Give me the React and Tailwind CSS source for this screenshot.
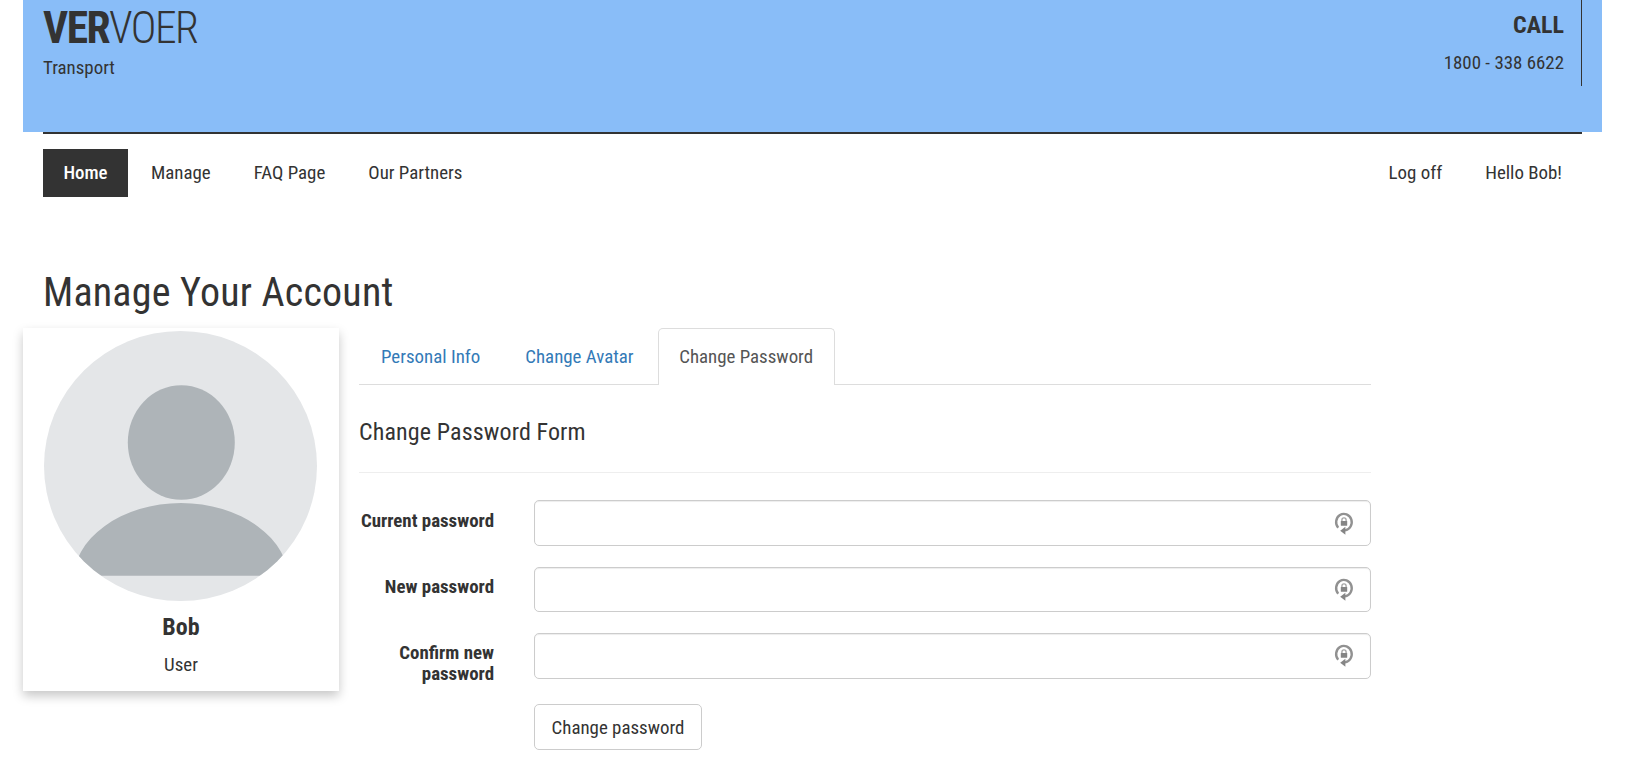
function ResetIcon() {
  return (
    <svg viewBox="0 0 20 24" className="h-6 w-5">
      <path d="M4.2 16.8 A7.8 8.3 0 1 1 11 19.4" fill="none" stroke="#919191" strokeWidth="2.4" />
      <path d="M6.2 19.8 L11.4 15.8 V23.8 Z" fill="#858585" />
      <path d="M7.9 10.6 V8.9 a2.1 2.1 0 0 1 4.2 0 V10.6" fill="none" stroke="#a3a3a3" strokeWidth="1.3" />
      <rect x="6.8" y="10" width="6.4" height="4.8" rx="0.5" fill="#858585" />
    </svg>
  );
}

function Avatar() {
  return (
    <svg viewBox="0 0 273 270" className="ml-[21px] block h-[270px] w-[273px]">
      <defs>
        <clipPath id="round">
          <ellipse cx="136.5" cy="135" rx="136.5" ry="135" />
        </clipPath>
      </defs>
      <g clipPath="url(#round)">
        <rect width="273" height="270" fill="#e4e6e8" />
        <ellipse cx="137.3" cy="111.5" rx="53.5" ry="57.3" fill="#aeb4b8" />
        <path d="M28.8 244.8 V251 A108.2 79 0 0 1 245.2 251 V244.8 Z" fill="#aeb4b8" />
      </g>
    </svg>
  );
}

function Field({ label, first, tall }) {
  return (
    <div className="flex items-start">
      <label className={"-ml-1 w-[139px] pl-1 text-right leading-[21px] font-bold " + (first ? "mt-[10px]" : "mt-[9px]")}>
        {label}
      </label>
      <div
        className={
          "ml-10 flex w-[837px] items-center justify-end rounded-[5px] border border-[#ccc] pr-4 shadow-[inset_0_1px_1px_rgba(0,0,0,0.075)] " +
          (tall ? "h-[46px] " : "h-[45px] ") +
          (first ? "" : "pb-0.5")
        }
      >
        <ResetIcon />
      </div>
    </div>
  );
}

export default function App() {
  return (
    <div className="h-[764px] w-[1642px] overflow-hidden bg-white pl-[23px] font-['Roboto_Condensed',Roboto,sans-serif] text-[18.9px] leading-[27px] text-[#333] [font-stretch:75%]">
      <header className="flex h-[132px] w-[1579px] justify-between bg-[#89bdf8] pl-5">
        <div>
          <div className="mt-1 h-[50px] text-[43.5px] leading-[50px] tracking-[-1.5px]">
            <span className="font-bold">VER</span>
            <span className="font-light">VOER</span>
          </div>
          <div>Transport</div>
        </div>
        <div className="mr-5 h-[86px] border-r border-[#333] pr-[17px] text-right">
          <div className="mt-2.5 text-2xl leading-[30px] font-bold">CALL</div>
          <div className="mt-[9px]">1800 - 338 6622</div>
        </div>
      </header>
      <nav className="ml-5 flex w-[1539px] border-t-2 border-[#333] pt-[15px] leading-[48px]">
        <a className="h-12 w-[85px] bg-[#333] text-center font-medium text-white">Home</a>
        <a className="ml-[23px]">Manage</a>
        <a className="ml-[43px]">FAQ Page</a>
        <a className="ml-[43px]">Our Partners</a>
        <a className="ml-auto">Log off</a>
        <a className="mr-5 ml-[43px]">Hello Bob!</a>
      </nav>
      <h1 className="mt-[71px] ml-5 h-[59px] text-[40px] leading-[50px] tracking-[0.2px]">Manage Your Account</h1>
      <div className="flex">
        <aside className="mt-px h-[363px] w-[316px] pt-[3px] text-center shadow-[0_5px_10px_rgba(0,0,0,0.22)]">
          <Avatar />
          <div className="mt-[11px] text-2xl leading-[30px] font-bold">Bob</div>
          <div className="mt-[9px]">User</div>
        </aside>
        <main className="mt-px ml-5 w-[1012px]">
          <div className="flex h-[57px] border-b border-[#ddd] leading-[57px]">
            <a className="ml-[22px] text-[#337ab7]">Personal Info</a>
            <a className="ml-[45px] text-[#337ab7]">Change Avatar</a>
            <a className="ml-[24px] h-[57px] w-[177px] rounded-t-[5px] border border-b-0 border-[#ddd] bg-white text-center leading-[55px] text-[#555]">
              Change Password
            </a>
          </div>
          <h4 className="mt-[32px] h-[56px] border-b border-[#eee] text-2xl leading-[30px] tracking-[0.12px]">Change Password Form</h4>
          <form className="mt-[27px]">
            <div className="flex flex-col gap-[21px]">
              <Field label="Current password" first tall />
              <Field label="New password" />
              <Field label="Confirm new password" tall />
            </div>
            <button type="button" className="mt-5 ml-[175px] h-[46px] w-[168px] rounded-[5px] border border-[#ccc] bg-white">
              Change password
            </button>
          </form>
        </main>
      </div>
    </div>
  );
}
